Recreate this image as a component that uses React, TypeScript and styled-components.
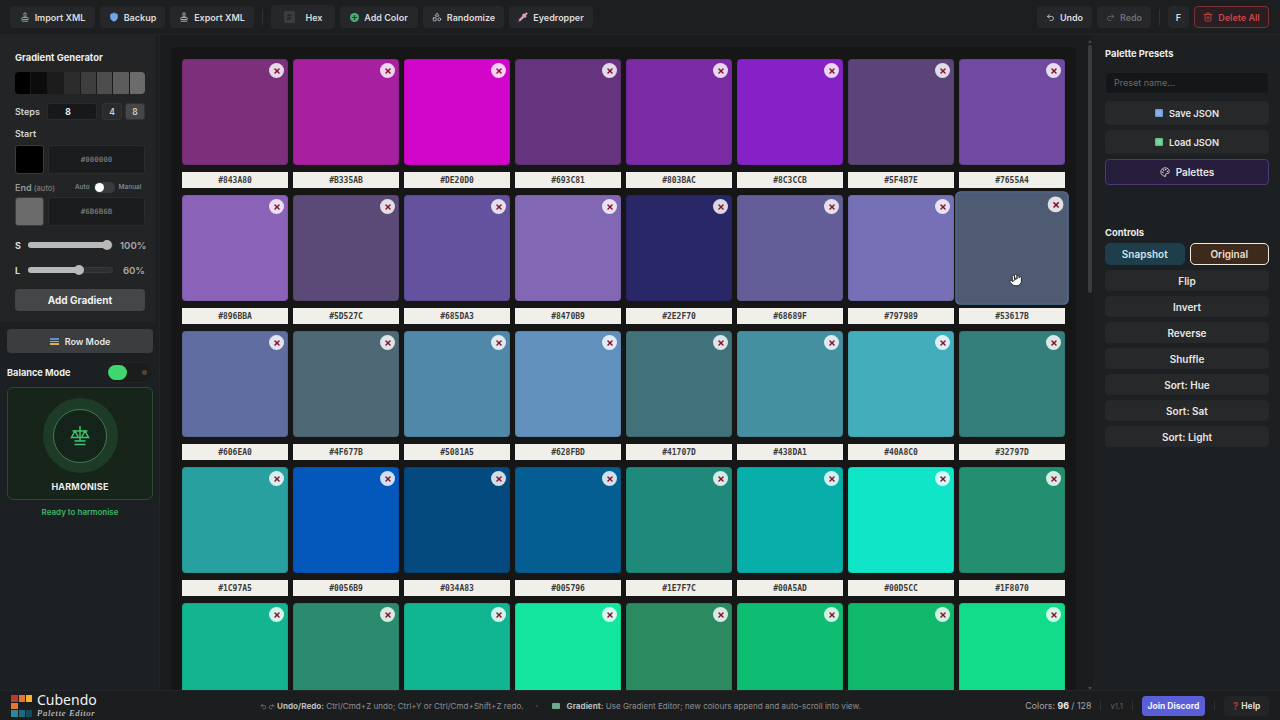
import React from 'react';
import styled, { createGlobalStyle } from 'styled-components';
import { Stamp, Shield, Plus, Shapes, Pipette, Undo2, Redo2, Trash2, Palette, Hand, X } from 'lucide-react';

const Global = createGlobalStyle`
  html, body { margin: 0; padding: 0; width: 1280px; height: 720px; overflow: hidden; background: #1b1c1e; }
  * { box-sizing: border-box; }
  body { font-family: Inter, "Liberation Sans", sans-serif; color: #e8e8e8; }
`;

const Page = styled.div`
  width: 1280px; height: 720px; display: flex; flex-direction: column; background: #1b1c1e; overflow: hidden;
`;
const Toolbar = styled.header`
  height: 35px; flex: none; display: flex; align-items: center; padding: 0 11px 0 10px; background: #1d1e20; border-bottom: 1px solid #242527;
`;
const ToolGroup = styled.div`display: flex; align-items: center; gap: 5px;`;
const ToolBtn = styled.button<{ $w: number; $tall?: boolean; $tone?: string }>`
  width: ${p => p.$w}px; height: ${p => p.$tall ? 24 : 22}px; border-radius: 4px; border: 1px solid ${p => p.$tone === 'danger' ? '#7a3237' : '#26282a'};
  background: ${p => p.$tone === 'danger' ? '#2a1e20' : '#25272a'};
  color: ${p => p.$tone === 'danger' ? '#c8484f' : p.$tone === 'off' ? '#6d6f71' : '#dcdcdc'};
  font: 600 9px Inter, sans-serif; display: flex; align-items: center; justify-content: center; gap: 5px; padding: 0;
`;
const VDiv = styled.span<{ $m: number }>`width: 1px; height: 16px; background: #303234; margin: 0 ${p => p.$m}px;`;
const Spring = styled.div`flex: 1;`;
const HexChip = styled.span`
  width: 11px; height: 12px; border-radius: 2px; background: #3c3d3f; color: #222; font: 700 7px Inter, sans-serif; display: flex; align-items: center; justify-content: center; margin-right: 6px;
`;
const AddDot = styled.span`
  width: 9px; height: 9px; border-radius: 50%; background: #4cae6e; display: flex; align-items: center; justify-content: center; color: #143;
`;

const Body = styled.div`flex: 1; display: flex; min-height: 0;`;

const Left = styled.aside`
  width: 160px; flex: none; background: #1d2022; border-right: 1px solid #232527; display: flex; flex-direction: column; padding: 0 7px;
`;
const GenPanel = styled.section`
  margin: 0 -7px; padding: 16px 10px 0 15px; height: 287px; background: #232425; width: 155px; flex: none;
`;
const PanelTitle = styled.h3`font: 700 9.4px Inter, sans-serif; color: #ececec; margin: 0; line-height: 14px;`;
const Ramp = styled.div`display: flex; gap: 1px; height: 22px; margin-top: 7px; border-radius: 4px; overflow: hidden; width: 130px; background: #1a1a1a;`;
const RampCell = styled.div<{ $c: string }>`flex: 1; background: ${p => p.$c}; border-radius: 1px;`;
const StepRow = styled.div`display: flex; align-items: center; margin-top: 9px; height: 17px;`;
const SmallLabel = styled.span`font: 600 9px Inter, sans-serif; color: #d4d4d4; width: 32px;`;
const StepInput = styled.div`
  width: 50px; height: 17px; padding-right: 8px; border-radius: 3px; background: #17181a; border: 1px solid #2a2b2d; color: #eee; font: 700 8.5px Inter, sans-serif; display: flex; align-items: center; justify-content: center;
`;
const StepBtn = styled.div<{ $on?: boolean }>`
  width: 20px; height: 17px; margin-left: ${p => p.$on ? 3 : 5}px; border-radius: 3px; background: ${p => p.$on ? '#454647' : '#2a2b2c'}; border: 1px solid #333435; color: #cfcfcf; font: 600 8.5px Inter, sans-serif; display: flex; align-items: center; justify-content: center;
`;
const ColorRow = styled.div<{ $mt: number }>`display: flex; gap: 4px; height: 29px; margin-top: ${p => p.$mt}px;`;
const ColorWell = styled.div<{ $c: string }>`width: 29px; height: 29px; border-radius: 3px; background: ${p => p.$c}; border: 1px solid #3a3b3c; flex: none;`;
const HexField = styled.div`
  flex: 1; border-radius: 3px; background: #1b1c1d; border: 1px solid #2a2b2d; color: #6f7071; font: 700 7.5px "DejaVu Sans Mono", monospace; display: flex; align-items: center; justify-content: center;
`;
const StartLabel = styled.div`font: 600 9px Inter, sans-serif; color: #d4d4d4; margin-top: 8px; line-height: 12px;`;
const EndRow = styled.div`display: flex; align-items: center; height: 14px; margin-top: 6px; white-space: nowrap;`;
const EndLabel = styled.span`font: 600 9px Inter, sans-serif; color: #9a9a9a; width: 60px; em { font-style: normal; font-size: 7.5px; color: #7c7c7c; font-weight: 500; }`;
const Tiny = styled.span`font: 500 6.5px Inter, sans-serif; color: #909090;`;
const Switch = styled.span`
  position: relative; display: block; width: 21px; height: 11px; border-radius: 6px; background: #3a3b3c; margin: 0 4px;
  &::after { content: ''; position: absolute; left: 1px; top: 1px; width: 9px; height: 9px; border-radius: 50%; background: #fff; }
`;
const SliderRow = styled.div<{ $mt: number }>`display: flex; align-items: center; height: 14px; margin-top: ${p => p.$mt}px;`;
const SliderLetter = styled.span`width: 13px; font: 700 9px Inter, sans-serif; color: #ddd;`;
const Track = styled.div`position: relative; width: 85px; height: 6px; border-radius: 3px; background: #2e2f30; border: 1px solid #3a3b3c;`;
const Fill = styled.div`height: 6px; background: #b9b9b9; border-radius: 3px; margin: -1px 0 0 -1px;`;
const Thumb = styled.div`position: absolute; top: -3px; width: 10px; height: 10px; border-radius: 50%; background: #b9b9b9; margin-left: -5px;`;
const Pct = styled.span`margin-left: 7px; font: 600 9.6px Inter, sans-serif; color: #a8a8a8; width: 25px; text-align: right;`;
const AddGrad = styled.button`
  width: 130px; height: 22px; margin-top: 12px; border-radius: 4px; border: 0; background: #454647; color: #f0f0f0; font: 700 10px Inter, sans-serif; padding: 0;
`;
const RowMode = styled.button`
  margin-top: 7px; width: 146px; height: 24px; flex: none; border-radius: 4px; border: 0; background: #3c3d3f; color: #e6e6e6; font: 600 9px Inter, sans-serif; display: flex; align-items: center; justify-content: center; gap: 6px;
`;
const Stripes = styled.span`
  width: 9px; height: 7px; background: linear-gradient(#5b8fd0 0 2px, #3c3d3f 2px 3px, #8fb8a0 3px 4px, #3c3d3f 4px 5px, #d2b35e 5px 7px);
`;
const BalanceRow = styled.div`display: flex; align-items: center; justify-content: space-between; height: 22px; margin-top: 8px; width: 146px;`;
const BalanceText = styled.span`font: 700 9.2px Inter, sans-serif; color: #ececec;`;
const BalToggle = styled.span`
  position: relative; width: 48px; height: 21px; border-radius: 11px; background: #1b1d1d; border: 1px solid #232628; display: block;
  &::before { content: ''; position: absolute; left: 2px; top: 2px; width: 19px; height: 15px; border-radius: 8px; background: #3ed66f; }
  &::after { content: ''; position: absolute; right: 5px; top: 7px; width: 5px; height: 5px; border-radius: 50%; background: #5a4433; }
`;
const HarmCard = styled.div`
  width: 146px; height: 113px; margin-top: 4px; border-radius: 6px; border: 1px solid #2a4a33; background: #16241a; display: flex; flex-direction: column; align-items: center; padding-top: 10px; flex: none;
`;
const Ring = styled.div`
  width: 75px; height: 75px; border-radius: 50%; background: #1d3b26; display: flex; align-items: center; justify-content: center;
`;
const RingInner = styled.div`
  width: 54px; height: 54px; border-radius: 50%; border: 1px solid #3f7a52; background: #14241a; display: flex; align-items: center; justify-content: center; color: #3fc46e;
`;
const HarmText = styled.div`font: 700 9px Inter, sans-serif; letter-spacing: .2px; color: #ececec; margin-top: 8px;`;
const Ready = styled.div`text-align: center; width: 146px; font: 600 8px Inter, sans-serif; color: #3cb566; margin-top: 7px;`;

const Main = styled.main`flex: none; width: 933px; padding: 12px 0 0 11px; display: flex; background: #1b1c1e;`;
const GridPanel = styled.div`
  width: 905px; flex: none; height: 100%; background: #161616; border-radius: 6px 6px 0 0; padding: 12px 0 0 11px; overflow: hidden;
`;
const Grid = styled.div`display: grid; grid-template-columns: repeat(8, 106px); column-gap: 5px; row-gap: 7px;`;
const Cell = styled.div`width: 106px;`;
const Swatch = styled.div<{ $c: string; $sel?: boolean }>`
  position: relative; width: 106px; height: 106px; border-radius: 4px; background: ${p => p.$c};
  box-shadow: inset 0 0 0 1px rgba(0, 0, 0, .07);
  ${p => p.$sel ? 'transform: scale(1.05); box-shadow: 0 0 0 1px #557aa6; z-index: 2;' : ''}
`;
const Remove = styled.span`
  position: absolute; right: 4px; top: 4px; width: 15px; height: 15px; border-radius: 50%; background: rgba(255, 255, 255, .82); color: #8c1030; display: flex; align-items: center; justify-content: center;
`;
const HexLabel = styled.div`
  margin-top: 7px; height: 16px; background: #f0efe9; color: #3a3a3a; font: 700 8px/17px "DejaVu Sans Mono", monospace; text-align: center;
`;
const Cursor = styled.span`position: absolute; left: 50px; top: 77px; color: #111; display: block; line-height: 0;`;

const ScrollCol = styled.div`width: 17px; flex: none; padding: 0 0 0 12px; display: flex; flex-direction: column; align-items: flex-start; background: #1b1c1e;`;
const ScrollArrow = styled.span<{ $down?: boolean }>`
  width: 0; height: 0; border-left: 2px solid transparent; border-right: 2px solid transparent;
  ${p => p.$down ? 'border-top: 3px solid #4a4b4d; margin-top: auto; margin-bottom: 0;' : 'border-bottom: 3px solid #4a4b4d; margin-top: -7px;'}
`;
const ScrollThumb = styled.div`width: 4px; height: 248px; margin-top: 2px; background: #3c3d3f; border-radius: 2px; flex: none;`;

const Right = styled.aside`
  width: 187px; flex: none; background: #1d2022; padding: 12px 11px 0 12px; display: flex; flex-direction: column;
`;
const PresetInput = styled.div`
  height: 22px; margin-top: 11px; border-radius: 4px; background: #151617; border: 1px solid #202122; color: #6a6b6c; font: 400 9px/20px Inter, sans-serif; padding-left: 8px;
`;
const RBtn = styled.button<{ $mt: number; $h: number; $v?: string }>`
  width: 100%; height: ${p => p.$h}px; margin-top: ${p => p.$mt}px; border-radius: 4px;
  border: 1px solid ${p => p.$v === 'purple' ? '#4c3a78' : '#26272a'};
  background: ${p => p.$v === 'purple' ? '#271d3c' : '#272829'}; color: #e6e6e6; font: 600 ${p => p.$v === 'tight' ? 9.3 : 10}px Inter, sans-serif;
  display: flex; align-items: center; justify-content: center; gap: 6px; padding: 0; flex: none;
`;
const IconTile = styled.span<{ $c: string }>`
  width: 8px; height: 8px; border-radius: 2px; background: ${p => p.$c}; box-shadow: inset 0 0 0 1.5px ${p => p.$c}, inset 0 0 0 4px #ffffff33;
`;
const ControlsTitle = styled(PanelTitle)`margin-top: 41px;`;
const ModeRow = styled.div`display: flex; gap: 5px; margin-top: 3px;`;
const ModeBtn = styled.button<{ $orig?: boolean }>`
  flex: 1; height: 22px; border-radius: 5px; padding: 0; font: 600 10px Inter, sans-serif; color: ${p => p.$orig ? '#ecdfcf' : '#cfe3ec'};
  background: ${p => p.$orig ? '#3e2a1c' : '#1e3e4c'}; border: ${p => p.$orig ? '1.5px solid #f0ebe0' : '1px solid #1e3e4c'};
`;

const Footer = styled.footer`
  height: 30px; flex: none; background: #1c1d1f; border-top: 1px solid #242527; display: flex; align-items: center; padding: 0 11px 0 11px; position: relative; z-index: 3;
`;
const Brand = styled.div`display: flex; align-items: center; gap: 5px; width: 249px;`;
const BrandStack = styled.div`display: flex; flex-direction: column;`;
const BrandName = styled.span`font: 400 14px/16px "Noto Sans", sans-serif; color: #f0f0f0; margin-top: -1px;`;
const BrandSub = styled.span`font: italic 400 8.5px/10px "Liberation Serif", serif; letter-spacing: .75px; color: #e0e0e0;`;
const Hint = styled.span`font: 400 8.1px Inter, sans-serif; color: #8e8f90; b { font-weight: 700; color: #bdbdbd; }`;
const HintIcons = styled.span`color: #8e8f90; display: inline-flex; gap: 1px; margin-right: 2px; vertical-align: -1px;`;
const Dot = styled.span`width: 2px; height: 2px; border-radius: 50%; background: #444; margin: 0 14px 0 12px;`;
const GradChip = styled.span`width: 8px; height: 6px; background: #6ea88e; border-radius: 1px; margin-right: 7px;`;
const Counts = styled.span`font: 400 8.8px Inter, sans-serif; color: #a5a5a5; b { color: #ececec; font-weight: 700; }`;
const Ver = styled.span`font: 400 8px Inter, sans-serif; color: #5e5f60;`;
const FDiv = styled.span`width: 1px; height: 9px; background: #2f3032; margin: 0 9px;`;
const Discord = styled.button`
  width: 63px; height: 20px; border-radius: 4px; border: 0; padding: 0; background: #5a5fd8; color: #f3f3ff; font: 700 8.5px Inter, sans-serif;
`;
const HelpBtn = styled.button`
  width: 45px; height: 20px; border-radius: 4px; border: 0; padding: 0; background: #232426; color: #dcdcdc; font: 700 8.5px Inter, sans-serif; display: flex; align-items: center; justify-content: center; gap: 3px;
  span { color: #b5303c; font-size: 10px; }
`;

const colors: [string, string][] = [
  ['843A80','#7c307c'],['B335AB','#a7209f'],['DE20D0','#d205cb'],['693C81','#66337f'],['803BAC','#7a2ba4'],['8C3CCB','#8621c7'],['5F4B7E','#5a4478'],['7655A4','#7049a0'],
  ['896BBA','#8a62b8'],['5D527C','#5b4a77'],['685DA3','#64529f'],['8470B9','#8267b4'],['2E2F70','#2a2769'],['68689F','#635e98'],['797989','#7670b6'],['53617B','#4f5a73'],
  ['606EA0','#5f6da0'],['4F677B','#4f6875'],['5081A5','#4f88a8'],['628FBD','#6090bb'],['41707D','#41727a'],['438DA1','#4490a0'],['40A8C0','#43adbc'],['32797D','#347f7c'],
  ['1C97A5','#28a0a0'],['0056B9','#0558bb'],['034A83','#054a7e'],['005796','#055e92'],['1E7F7C','#1f8a7c'],['00A5AD','#08aeaa'],['00D5CC','#10e5c8'],['1F8070','#238f70'],
  ['r5a','#12b590'],['r5b','#2c8a6e'],['r5c','#10b592'],['r5d','#14e6a0'],['r5e','#2b8a60'],['r5f','#0fbd72'],['r5g','#10b86c'],['r5h','#12dc8a'],
];
const ramp = ['#000000','#0c0c0c','#1c1c1c','#2c2c2c','#3e3e3e','#4d4d4d','#5c5c5c','#6b6b6b'];

const ScaleIcon = () => (
  <svg width="20" height="22" viewBox="0 0 20 22" fill="none" stroke="currentColor" strokeWidth="1.5">
    <path d="M10 1v15M2.5 6h15" />
    <path d="M5 6 1.5 12.5h7zM15 6l-3.5 6.5h7z" />
    <path d="M4.5 16h11M4.5 19.5h11" />
  </svg>
);

export default function App() {
  return (
    <Page>
      <Global />
      <Toolbar>
        <ToolGroup>
          <ToolBtn $w={85}><Stamp size={10} color="#8fc7a0" />Import XML</ToolBtn>
          <ToolBtn $w={65}><Shield size={10} color="#6fa8e8" fill="#6fa8e8" />Backup</ToolBtn>
          <ToolBtn $w={84}><Stamp size={10} color="#c8c8c8" />Export XML</ToolBtn>
        </ToolGroup>
        <VDiv $m={8} />
        <ToolGroup>
          <ToolBtn $w={64} $tall><HexChip>#</HexChip>Hex</ToolBtn>
          <ToolBtn $w={78}><AddDot><Plus size={7} strokeWidth={4} /></AddDot>Add Color</ToolBtn>
          <ToolBtn $w={81}><Shapes size={10} color="#c8c8c8" />Randomize</ToolBtn>
          <ToolBtn $w={84}><Pipette size={10} color="#e0a0c0" fill="#e0a0c0" />Eyedropper</ToolBtn>
        </ToolGroup>
        <Spring />
        <ToolGroup>
          <ToolBtn $w={55}><Undo2 size={9} />Undo</ToolBtn>
          <ToolBtn $w={54} $tone="off"><Redo2 size={9} />Redo</ToolBtn>
        </ToolGroup>
        <VDiv $m={8} />
        <ToolGroup>
          <ToolBtn $w={21}>F</ToolBtn>
          <ToolBtn $w={75} $tone="danger"><Trash2 size={10} />Delete All</ToolBtn>
        </ToolGroup>
      </Toolbar>
      <Body>
        <Left>
          <GenPanel>
            <PanelTitle>Gradient Generator</PanelTitle>
            <Ramp>{ramp.map(c => <RampCell key={c} $c={c} />)}</Ramp>
            <StepRow>
              <SmallLabel>Steps</SmallLabel>
              <StepInput>8</StepInput>
              <StepBtn>4</StepBtn>
              <StepBtn $on>8</StepBtn>
            </StepRow>
            <StartLabel>Start</StartLabel>
            <ColorRow $mt={5}><ColorWell $c="#000" /><HexField>#000000</HexField></ColorRow>
            <EndRow>
              <EndLabel>End <em>(auto)</em></EndLabel>
              <Tiny>Auto</Tiny><Switch /><Tiny>Manual</Tiny>
            </EndRow>
            <ColorRow $mt={3}><ColorWell $c="#6b6b6b" /><HexField>#6B6B6B</HexField></ColorRow>
            <SliderRow $mt={12}>
              <SliderLetter>S</SliderLetter>
              <Track><Fill style={{ width: '100%' }} /><Thumb style={{ left: '94%' }} /></Track>
              <Pct>100%</Pct>
            </SliderRow>
            <SliderRow $mt={11}>
              <SliderLetter>L</SliderLetter>
              <Track><Fill style={{ width: '60%' }} /><Thumb style={{ left: '60%' }} /></Track>
              <Pct>60%</Pct>
            </SliderRow>
            <AddGrad>Add Gradient</AddGrad>
          </GenPanel>
          <RowMode><Stripes />Row Mode</RowMode>
          <BalanceRow><BalanceText>Balance Mode</BalanceText><BalToggle /></BalanceRow>
          <HarmCard>
            <Ring><RingInner><ScaleIcon /></RingInner></Ring>
            <HarmText>HARMONISE</HarmText>
          </HarmCard>
          <Ready>Ready to harmonise</Ready>
        </Left>
        <Main>
          <GridPanel>
            <Grid>
              {colors.map(([hex, shown], i) => {
                const sel = hex === '53617B';
                return (
                  <Cell key={hex}>
                    <Swatch $c={shown} $sel={sel}>
                      <Remove><X size={8} strokeWidth={4.5} /></Remove>
                      {sel && <Cursor><Hand size={13} fill="#fff" strokeWidth={1.5} /></Cursor>}
                    </Swatch>
                    {i < 32 && <HexLabel>#{hex}</HexLabel>}
                  </Cell>
                );
              })}
            </Grid>
          </GridPanel>
          <ScrollCol>
            <ScrollArrow />
            <ScrollThumb />
            <ScrollArrow $down />
          </ScrollCol>
        </Main>
        <Right>
          <PanelTitle>Palette Presets</PanelTitle>
          <PresetInput>Preset name...</PresetInput>
          <RBtn $mt={7} $h={24} $v="tight"><IconTile $c="#6f9fe0" />Save JSON</RBtn>
          <RBtn $mt={5} $h={24} $v="tight"><IconTile $c="#63c488" />Load JSON</RBtn>
          <RBtn $mt={5} $h={26} $v="purple"><Palette size={10} />Palettes</RBtn>
          <ControlsTitle>Controls</ControlsTitle>
          <ModeRow><ModeBtn>Snapshot</ModeBtn><ModeBtn $orig>Original</ModeBtn></ModeRow>
          {['Flip','Invert','Reverse','Shuffle','Sort: Hue','Sort: Sat','Sort: Light'].map(t => (
            <RBtn key={t} $mt={5} $h={21}>{t}</RBtn>
          ))}
        </Right>
      </Body>
      <Footer>
        <Brand>
          <svg width="21" height="22" viewBox="0 0 21 22">
            <rect x="0" y="0" width="7" height="7" fill="#c0392b" />
            <rect x="8" y="0" width="6" height="7" fill="#e8762c" />
            <rect x="15" y="0" width="6" height="7" fill="#f2b233" />
            <rect x="0" y="8" width="7" height="6" fill="#e8762c" />
            <rect x="0" y="15" width="7" height="7" fill="#2a8a9a" />
            <rect x="8" y="15" width="6" height="7" fill="#1d6a80" />
            <rect x="15" y="15" width="6" height="7" fill="#174a60" />
          </svg>
          <BrandStack><BrandName>Cubendo</BrandName><BrandSub>Palette Editor</BrandSub></BrandStack>
        </Brand>
        <Hint>
          <HintIcons><Undo2 size={7} /><Redo2 size={7} /></HintIcons>
          <b>Undo/Redo:</b> Ctrl/Cmd+Z undo; Ctrl+Y or Ctrl/Cmd+Shift+Z redo.
        </Hint>
        <Dot />
        <GradChip />
        <Hint><b>Gradient:</b> Use Gradient Editor; new colours append and auto-scroll into view.</Hint>
        <Spring />
        <Counts>Colors: <b>96</b> / 128</Counts>
        <FDiv />
        <Ver>v1.1</Ver>
        <FDiv />
        <Discord>Join Discord</Discord>
        <FDiv />
        <HelpBtn><span>?</span>Help</HelpBtn>
      </Footer>
    </Page>
  );
}
